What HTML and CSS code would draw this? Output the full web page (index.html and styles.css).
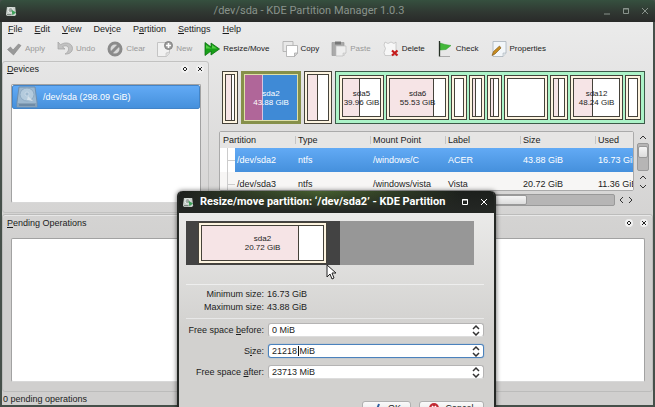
FILE: index.html
```html
<!DOCTYPE html>
<html lang="en">
<head>
    <meta charset="UTF-8">
    <meta name="viewport" content="width=device-width, initial-scale=1.0">
    <title>/dev/sda - KDE Partition Manager 1.0.3</title>
    <link rel="stylesheet" href="styles.css">
</head>
<body>
    <header class="titlebar">
        <svg class="app-icon" viewBox="0 0 12 12"><path d="M1 1h9l1 8-1 2H1L0 9z" fill="#c9d0cb"/><circle cx="5" cy="4.500" r="2.800" fill="#a2aaa5" stroke="#eef2ef"/><path d="M6 4l5 3-4 3z" fill="#3fa05a"/><path d="M1 9h5v1H1z" fill="#657069"/></svg>
        <h1>/dev/sda - KDE Partition Manager 1.0.3</h1>
        <div class="window-buttons">
            <button type="button" aria-label="Minimize"><svg viewBox="0 0 8 8"><path d="M1 7h6"/></svg></button>
            <button type="button" aria-label="Maximize"><svg viewBox="0 0 8 8"><path d="M1.500 1.500h5v5h-5zM1 2h6"/></svg></button>
            <button type="button" aria-label="Close"><svg viewBox="0 0 8 8"><path d="M1 1l6 6M7 1L1 7"/></svg></button>
        </div>
    </header>

    <div class="window">
        <nav class="menubar">
            <button type="button"><u>F</u>ile</button>
            <button type="button"><u>E</u>dit</button>
            <button type="button"><u>V</u>iew</button>
            <button type="button">Dev<u>i</u>ce</button>
            <button type="button">P<u>a</u>rtition</button>
            <button type="button"><u>S</u>ettings</button>
            <button type="button"><u>H</u>elp</button>
        </nav>

        <div class="toolbar">
            <button type="button" disabled>
                <svg viewBox="0 0 16 16"><path d="M1.500 8.500l3-2.500 2.500 3 5.500-6 2.500 1.500L7.500 14z" fill="#999" stroke="#858585" stroke-width=".6"/></svg>Apply
            </button>
            <button type="button" disabled>
                <svg viewBox="0 0 16 16"><path d="M1 1v7h7L5.500 5.800C9 3.500 12 5.500 11.500 8.500c-.3 2-1.500 3.500-3.500 4.500 4 .5 7.500-2 7.500-5.500C15.500 2.500 9 0 3.500 3.700z" fill="#c2c2c2" stroke="#a0a0a0" stroke-width=".7"/></svg>Undo
            </button>
            <button type="button" disabled>
                <svg viewBox="0 0 16 16"><circle cx="8" cy="8" r="6" fill="#d8d8d8" stroke="#8b8b8b" stroke-width="3"/><path d="M12 4l-8 8" stroke="#8b8b8b" stroke-width="3"/></svg>Clear
            </button>
            <button type="button" disabled>
                <svg viewBox="0 0 16 16"><path d="M.500 1.500h12V12l-3 3.500h-9z" fill="#f1f1f1" stroke="#c4c4c4"/><path d="M12.500 11l-3.500 1v3.500" fill="#ddd" stroke="#c4c4c4" stroke-width=".7"/><circle cx="11.500" cy="4.500" r="4" fill="#999" stroke="#858585"/><path d="M11.500 2v5M9 4.500h5" stroke="#fff" stroke-width="1.600"/></svg>New
            </button>
            <button type="button">
                <svg viewBox="0 0 16 16"><path d="M1 1.500l6 4.500V2l8.500 6L7 14v-4l-6 4.500z" fill="#18a018" stroke="#0b6e12" stroke-width=".8"/><path d="M2 4l6 4V4l5 3.500H2z" fill="#54cf46"/></svg>Resize/Move
            </button>
            <button type="button">
                <svg viewBox="0 0 16 16" fill="#f5f5f5" stroke="#aaa" stroke-width=".8"><path d="M1 .500h10v10H1z"/><path d="M4.500 4.500h11V12l-3 3.500h-8z" fill="#fff"/><path d="M15.500 12h-3v3.500z" fill="#ddd"/></svg>Copy
            </button>
            <button type="button" disabled>
                <svg viewBox="0 0 16 16"><path d="M1 1.500h12v13H1z" fill="#aaa" stroke="#999" stroke-width=".7"/><path d="M4 .500h6v3H4z" fill="#777"/><path d="M5 5h10v7l-3 3H5z" fill="#eee" stroke="#bbb" stroke-width=".7"/><path d="M15 12h-3v3" fill="#ddd" stroke="#bbb" stroke-width=".5"/></svg>Paste
            </button>
            <button type="button">
                <svg viewBox="0 0 16 16"><path d="M2 1l3 1.500L8 1l3 1.500L13 1v13.500H2l-1-3 1.500-4L1 4z" fill="#f7f7f7" stroke="#bbb" stroke-width=".7"/><path d="M9 9.500l5.500 5M14.500 9.500l-5.500 5" stroke="#c41b1b" stroke-width="2.200"/></svg>Delete
            </button>
            <button type="button">
                <svg viewBox="0 0 16 16"><path d="M3 15.500h10" stroke="#aaa"/><path d="M3 2l5 1.500 6 1-5 4-6 .500z" fill="#43b83a" stroke="#2f9a2d" stroke-width=".5"/><path d="M2.500 0v15.500" stroke="#263126" stroke-width="1.300"/></svg>Check
            </button>
            <button type="button">
                <svg viewBox="0 0 16 16"><path d="M2 .500h13V12l-3 3.500H2z" fill="#f2f6f9" stroke="#a8b3bb" stroke-width=".8"/><path d="M15 12h-3v3.500" fill="#dfe5ea" stroke="#a8b3bb" stroke-width=".6"/><path d="M1 14.500l1.500-4 6-5.500 1.500 2-6 6z" fill="#c78b1f" stroke="#7b5210" stroke-width=".6"/></svg>Properties
            </button>
        </div>

        <main class="main">
            <section class="dock devices">
                <div class="dock-header">
                    <h2><u>D</u>evices</h2>
                    <button type="button" aria-label="Float"><svg viewBox="0 0 6 6"><path d="M3 1l2 2-2 2-2-2z"/></svg></button>
                    <button type="button" aria-label="Close"><svg viewBox="0 0 6 6"><path d="M1 1l4 4M5 1L1 5"/></svg></button>
                </div>
                <ul class="device-list">
                    <li>
                        <svg viewBox="0 0 22 22"><path d="M3 1h16l2 15v5H1v-5z" fill="#9db8cf" stroke="#6e8faf"/><ellipse cx="11" cy="8.500" rx="7" ry="6.500" fill="#b4cbdd" stroke="#8fabc4"/><circle cx="11" cy="8" r="2" fill="#9fbad0" stroke="#d7e4ee" stroke-width=".6"/><path d="M12 10l5 5-6-1z" fill="#d5e1ea"/><path d="M1 17h20v4H1z" fill="#86a1b9"/><path d="M3 19h16" stroke="#577795"/></svg>
                        /dev/sda (298.09 GiB)
                    </li>
                </ul>
            </section>

            <section class="partitions">
                <div class="disk">
                    <div class="part"><div class="space"><div class="used" style="width: 70%"></div></div></div>
                    <div class="part selected"><div class="space"><div class="used" style="width: 35%"></div><p>sda2<br>43.88 GiB</p></div></div>
                    <div class="part"><div class="space"><div class="used" style="width: 52%"></div></div></div>
                    <div class="extended">
                        <div class="part"><div class="space"><div class="used" style="width: 46%"></div><p>sda5<br>39.96 GiB</p></div></div>
                        <div class="part"><div class="space"><div class="used" style="width: 80%"></div><p>sda6<br>55.53 GiB</p></div></div>
                        <div class="part"><div class="space"></div></div>
                        <div class="part"><div class="space"><div class="used" style="width: 36%"></div></div></div>
                        <div class="part"><div class="space"><div class="used" style="width: 50%"></div></div></div>
                        <div class="part"><div class="space"></div></div>
                        <div class="part"><div class="space"><div class="used" style="width: 52%"></div></div></div>
                        <div class="part"><div class="space"><div class="used" style="width: 43%"></div><p>sda12<br>48.24 GiB</p></div></div>
                        <div class="part"><div class="space"></div></div>
                    </div>
                </div>

                <div class="table-area">
                    <div class="table-view">
                        <table>
                            <thead>
                                <tr><th>Partition</th><th>Type</th><th>Mount Point</th><th>Label</th><th>Size</th><th>Used</th></tr>
                            </thead>
                            <tbody>
                                <tr class="current"><td>/dev/sda2</td><td>ntfs</td><td>/windows/C</td><td>ACER</td><td>43.88 GiB</td><td>16.73 GiB</td></tr>
                                <tr><td>/dev/sda3</td><td>ntfs</td><td>/windows/vista</td><td>Vista</td><td>20.72 GiB</td><td>11.36 GiB</td></tr>
                            </tbody>
                        </table>
                    </div>
                    <div class="vscroll">
                        <svg viewBox="0 0 8 8"><path d="M1 6l3-3 3 3"/></svg>
                        <div class="track"><div class="thumb"></div></div>
                        <svg viewBox="0 0 8 8"><path d="M1 6l3-3 3 3"/></svg>
                        <svg viewBox="0 0 8 8"><path d="M1 2l3 3 3-3"/></svg>
                    </div>
                    <div class="hscroll">
                        <div class="track"><div class="thumb"></div></div>
                        <svg viewBox="0 0 8 8"><path d="M6 1L3 4l3 3"/></svg>
                        <svg viewBox="0 0 8 8"><path d="M2 1l3 3-3 3"/></svg>
                    </div>
                </div>
            </section>
        </main>

        <section class="dock pending">
            <div class="dock-header">
                <h2><u>P</u>ending Operations</h2>
                <button type="button" aria-label="Float"><svg viewBox="0 0 6 6"><path d="M3 1l2 2-2 2-2-2z"/></svg></button>
                <button type="button" aria-label="Close"><svg viewBox="0 0 6 6"><path d="M1 1l4 4M5 1L1 5"/></svg></button>
            </div>
            <div class="operations"></div>
        </section>

        <footer class="statusbar">0 pending operations</footer>
    </div>

    <div class="dialog" role="dialog" aria-labelledby="dialogTitle">
        <div class="dialog-title">
            <svg class="app-icon" viewBox="0 0 12 12"><path d="M1 1h9l1 8-1 2H1L0 9z" fill="#c9d0cb"/><circle cx="5" cy="4.500" r="2.800" fill="#a2aaa5" stroke="#eef2ef"/><path d="M6 4l5 3-4 3z" fill="#3fa05a"/><path d="M1 9h5v1H1z" fill="#657069"/></svg>
            <h2 id="dialogTitle">Resize/move partition: ‘/dev/sda2’ - KDE Partition</h2>
            <div class="window-buttons">
                <button type="button" aria-label="Maximize"><svg viewBox="0 0 8 8"><path d="M1.500 1.500h5v5h-5zM1 2h6"/></svg></button>
                <button type="button" aria-label="Close"><svg viewBox="0 0 8 8"><path d="M1 1l6 6M7 1L1 7"/></svg></button>
            </div>
        </div>
        <form class="dialog-body">
            <div class="resizer">
                <div class="part"><div class="space"><div class="used" style="width: 80%"></div><p>sda2<br>20.72 GiB</p></div></div>
            </div>
            <dl class="limits">
                <dt>Minimum size:</dt><dd>16.73 GiB</dd>
                <dt>Maximum size:</dt><dd>43.88 GiB</dd>
            </dl>
            <div class="fields">
                <label for="before">Free space <u>b</u>efore:</label>
                <div class="spin"><input id="before" type="text" value="0 MiB"><svg viewBox="0 0 8 12"><path d="M1 5l3-3 3 3M1 8l3 3 3-3"/></svg></div>
                <label for="size">S<u>i</u>ze:</label>
                <div class="spin active"><input id="size" type="text" value="21218 MiB"><span class="caret"></span><svg viewBox="0 0 8 12"><path d="M1 5l3-3 3 3M1 8l3 3 3-3"/></svg></div>
                <label for="after">Free space <u>a</u>fter:</label>
                <div class="spin"><input id="after" type="text" value="23713 MiB"><svg viewBox="0 0 8 12"><path d="M1 5l3-3 3 3M1 8l3 3 3-3"/></svg></div>
            </div>
            <div class="actions">
                <button type="button"><svg viewBox="0 0 10 10"><path d="M1 6l3 3 3-8" fill="none" stroke="#2f5f9f" stroke-width="2"/></svg><span><u>O</u>K</span></button>
                <button type="button"><svg viewBox="0 0 10 10"><circle cx="5" cy="5" r="5" fill="#c22b35"/><path d="M3 3l4 4M7 3L3 7" stroke="#fff" stroke-width="1.500"/></svg><span><u>C</u>ancel</span></button>
            </div>
        </form>
    </div>

    <svg class="cursor" viewBox="0 0 10 16"><path d="M1 1v12l3-3 2 5 2-1-2-5h4z" fill="#fff" stroke="#222"/></svg>
</body>
</html>
```
FILE: styles.css
```css
* {
    box-sizing: border-box;
}

body {
    margin: 0;
    height: 100vh;
    display: flex;
    flex-direction: column;
    position: relative;
    overflow: hidden;
    background-color: #46504a;
    color: #1c1c1c;
    font-family: "Liberation Sans", Arial, sans-serif;
    font-size: 9px;
    line-height: 12px;
}

h1, h2, p, ul, dl, dd {
    margin: 0;
    padding: 0;
    font-weight: normal;
}

button {
    padding: 0;
    border: none;
    background: none;
    color: inherit;
    font: inherit;
}

u {
    text-underline-offset: 1px;
}

.titlebar {
    flex: none;
    display: flex;
    align-items: center;
    height: 22px;
    padding: 0 6px;
    border-radius: 4px 4px 0 0;
    background: linear-gradient(#36503f, #303832 55%, #292a29);
    color: #89938c;
}

.titlebar h1 {
    flex: 1;
    padding-left: 32px;
    text-align: center;
    font-family: Roboto, sans-serif;
    font-size: 11px;
    padding: 0 2px 0 0;
}

.app-icon {
    width: 11px;
    height: 11px;
}

.window-buttons {
    display: flex;
    gap: 11px;
}

.window-buttons svg {
    display: block;
    width: 8px;
    height: 8px;
    fill: none;
    stroke: currentColor;
}

.window {
    flex: 1;
    display: flex;
    flex-direction: column;
    min-height: 0;
    margin: 0 2px 2px;
    background: linear-gradient(#ebebeb, #d0cfce 60%);
}

.menubar {
    display: flex;
    gap: 12px;
    padding: 1px 6px 3px;
}

.toolbar {
    display: flex;
    gap: 12px;
    padding: 3px 4px 1px;
    font-size: 8px;
}

.toolbar button {
    display: flex;
    align-items: center;
    gap: 3px;
}

.toolbar button:disabled {
    color: #999;
}

.toolbar svg {
    width: 16px;
    height: 16px;
    fill: none;
}

.main {
    display: grid;
    grid-template-columns: 207fr 434fr;
    grid-template-rows: minmax(0, 1fr);
    gap: 10px;
    height: 152px;
    margin-top: 3px;
}

.dock {
    display: flex;
    flex-direction: column;
    border: 1px solid #c2c2c1;
    border-radius: 3px;
    box-shadow: inset 0 1px #e8e8e8;
}

.dock-header {
    display: flex;
    align-items: center;
    gap: 7px;
    padding: 1px 4px;
}

.dock-header h2 {
    flex: 1;
    font-size: 9px;
}

.dock-header button {
    width: 8px;
    height: 8px;
    border-radius: 4px;
    background-color: #f1f1f1;
}

.dock-header svg {
    display: block;
    width: 6px;
    height: 6px;
    margin: 1px;
    fill: none;
    stroke: #222;
}

.device-list,
.operations {
    flex: 1;
    margin: 8px 7px 9px 8px;
    border: 1px solid #a2a2a2;
    border-bottom-color: #d8d8d8;
    border-radius: 2px;
    background-color: #fff;
}

.device-list li {
    display: flex;
    align-items: center;
    gap: 5px;
    height: 24px;
    padding-left: 3px;
    border: 1px solid #4284c8;
    border-radius: 2px;
    background: linear-gradient(#62aaf5, #4590dc);
    color: #fff;
}

.device-list svg {
    width: 22px;
    height: 22px;
}

.partitions {
    min-width: 0;
    display: flex;
    flex-direction: column;
    gap: 7px;
    padding: 10px 4px 7px 0;
}

.disk {
    flex: none;
    display: grid;
    grid-template-columns: 16fr 60fr 28fr 310fr;
    gap: 3px;
    height: 53px;
    margin: 0 4px 0 3px;
}

.extended {
    display: grid;
    grid-template-columns: 46fr 65fr 16fr 16fr 16fr 45fr 18fr 55fr 16fr;
    gap: 2px;
    padding: 3px;
    border: 1px solid #3c5a48;
    background-color: #acf3c8;
}

.part {
    display: flex;
    min-width: 0;
    padding: 2px;
    border: 1px solid #45423a;
    background-color: #fdf4e0;
}

.space {
    flex: 1;
    display: flex;
    align-items: center;
    justify-content: center;
    min-width: 0;
    position: relative;
    border: 1px solid #45423a;
    background-color: #fff;
}

/* used share of the partition, the caption is drawn over it */
.used {
    position: absolute;
    top: 0;
    bottom: 0;
    left: 0;
    border-right: 1px solid #45423a;
    background-color: #f6e4e6;
}

.part p {
    position: relative;
    font-size: 8px;
    line-height: 9px;
    text-align: center;
    white-space: nowrap;
}

.part.selected {
    padding: 0;
    border: 3px solid #86904a;
}

.selected .space {
    border-color: #dfe0a8;
    background-color: #3f8ad6;
    color: #fff;
}

.selected .used {
    border-color: #d8c4e0;
    background-color: #b06699;
}

.table-area {
    display: grid;
    grid-template-columns: minmax(0, 1fr) 12px;
    grid-template-rows: minmax(0, 1fr) 12px;
    gap: 3px;
    flex: 1;
    min-height: 0;
}

.table-view {
    overflow: hidden;
    border: 1px solid #aaa;
    border-radius: 2px;
    background-color: #fff;
}

table {
    width: 450px;
    table-layout: fixed;
    border-collapse: collapse;
}

th, td {
    padding: 0 0 0 3px;
    text-align: left;
    font-weight: normal;
    white-space: nowrap;
}

th {
    height: 16px;
    background-color: #e6e5e4;
}

th + th {
    background: linear-gradient(#c4c4c4, #c4c4c4) 0 4px / 1px 8px no-repeat #e6e5e4;
}

td {
    height: 24px;
    background-color: #f7f6f5;
}

td:first-child {
    padding-left: 17px;
    background: linear-gradient(#ccc, #ccc) 7px 12px / 8px 1px no-repeat, linear-gradient(#ccc, #ccc) 7px 0 / 1px 100% no-repeat #f7f6f5;
}

.current td {
    background: linear-gradient(#62aaf5, #4590dc);
    color: #fff;
}

.current td:first-child {
    background: linear-gradient(#ccc, #ccc) 7px 12px / 8px 1px no-repeat, linear-gradient(#ccc, #ccc) 7px 0 / 1px 100% no-repeat, linear-gradient(90deg, #fff 15px, transparent 15px), linear-gradient(#62aaf5, #4590dc);
}

.vscroll,
.hscroll {
    display: flex;
    align-items: center;
    gap: 2px;
}

.vscroll {
    flex-direction: column;
    padding-top: 2px;
}

.hscroll {
    grid-column: 1 / 3;
    padding-right: 14px;
}

.vscroll svg,
.hscroll svg {
    flex: none;
    width: 8px;
    height: 8px;
    fill: none;
    stroke: #333;
}

.track {
    flex: 1;
    align-self: stretch;
    border: 1px solid #999;
    border-radius: 2px;
    background-color: #b6b5b5;
}

.thumb {
    border: 1px solid #999;
    border-radius: 2px;
    background: linear-gradient(#f5f5f5, #dcdcdc);
}

.vscroll .thumb {
    height: 12px;
    margin-top: 2px;
}

.hscroll .thumb {
    width: 78%;
    height: 100%;
}

.pending {
    flex: 1;
    margin-top: 1px;
    border-color: #bcbcbb;
}

.pending .dock-header {
    padding-top: 2px;
}

.statusbar {
    padding: 1px 1px 0;
}

.dialog {
    position: absolute;
    top: 191px;
    left: 177px;
    width: 319px;
    height: 232px;
    display: flex;
    flex-direction: column;
    border: 2px solid #252825;
    border-top: none;
    border-radius: 5px 5px 0 0;
    background: linear-gradient(#efefee, #d2d1cf 60%);
    box-shadow: 0 0 5px rgba(0, 0, 0, 0.6);
}

.dialog-title {
    flex: none;
    display: flex;
    align-items: center;
    gap: 6px;
    height: 22px;
    padding: 0 6px 0 4px;
    border-radius: 4px 4px 0 0;
    background: linear-gradient(transparent, #242724 90%), linear-gradient(90deg, #1c1f1c, #46602f 45%, #1c1f1c 90%);
    color: #fff;
}

.dialog-title h2 {
    flex: 1;
    overflow: hidden;
    white-space: nowrap;
    font-family: Roboto, sans-serif;
    font-size: 11px;
    font-weight: bold;
}

.dialog-title .app-icon {
    flex: none;
}

.dialog-body {
    padding: 8px 10px 0 7px;
}

.resizer {
    display: flex;
    height: 44px;
    margin-right: 10px;
    padding: 1px 0 1px 12px;
    background: linear-gradient(90deg, #434343 154px, #979797 154px);
}

.resizer .part {
    width: 129px;
}

.limits,
.fields {
    display: grid;
    grid-template-columns: 78px 1fr;
    column-gap: 3px;
    text-align: right;
}

.limits {
    row-gap: 1px;
    margin-top: 19px;
    padding: 3px 0 5px;
    border-top: 1px solid #eee;
    border-bottom: 1px solid #e8e8e8;
}

.limits dd {
    text-align: left;
}

.fields {
    align-items: center;
    row-gap: 7px;
    margin-top: 4px;
}

.spin {
    display: flex;
    align-items: center;
    position: relative;
    height: 14px;
    margin-left: 1px;
    padding: 0 3px;
    border: 1px solid #b5b4b4;
    border-bottom-color: #ddd;
    border-radius: 3px;
    background-color: #fff;
}

.spin.active {
    border-color: #4b82bd;
    box-shadow: 0 0 1px #4b82bd;
}

.spin input {
    flex: 1;
    min-width: 0;
    padding: 0;
    border: none;
    outline: none;
    background: none;
    color: inherit;
    font: inherit;
}

.spin svg {
    width: 8px;
    height: 12px;
    fill: none;
    stroke: #333;
    stroke-width: 1.5;
}

.caret {
    position: absolute;
    top: 1px;
    left: 29px;
    width: 1px;
    height: 10px;
    background-color: #111;
}

.actions {
    display: flex;
    justify-content: flex-end;
    gap: 8px;
    margin-top: 22px;
}

.actions button {
    display: flex;
    align-items: center;
    justify-content: center;
    gap: 6px;
    width: 49px;
    height: 14px;
    border: 1px solid #b0b0b0;
    border-radius: 3px;
    background: linear-gradient(#fafafa, #e4e4e4);
}

.actions button + button {
    width: 65px;
}

.actions svg {
    width: 10px;
    height: 10px;
}

.cursor {
    position: absolute;
    top: 264px;
    left: 326px;
    width: 10px;
    height: 16px;
}
```
